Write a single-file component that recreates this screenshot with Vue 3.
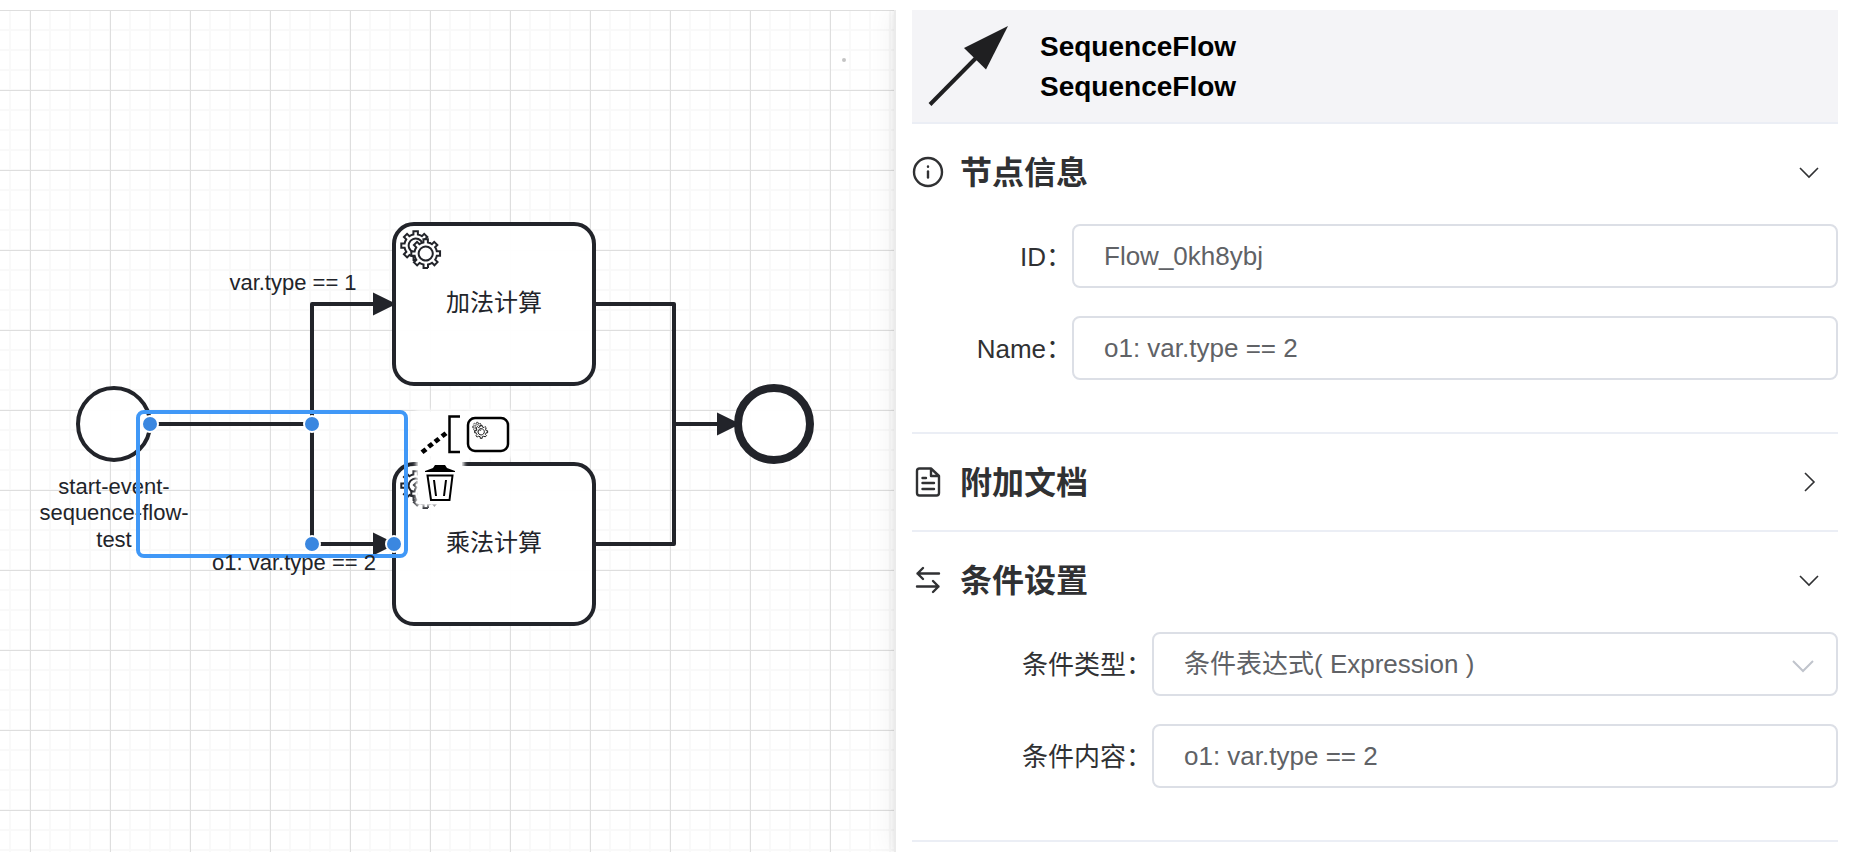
<script setup>
import { reactive, ref } from 'vue'

const gear =
  'v -1.71335 c 0.352326,-0.0705 0.703932,-0.17838 1.047628,-0.32133 0.344416,-0.14465 0.665822,-0.32133 0.966377,-0.52145 l 1.19431,1.18005 1.567487,-1.57688 -1.195028,-1.18014 c 0.403376,-0.61394 0.683079,-1.29908 0.825447,-2.01824 l 1.622133,-0.01 v -2.2196 l -1.636514,0.01 c -0.07333,-0.35153 -0.178319,-0.70024 -0.323564,-1.04372 -0.145244,-0.34406 -0.321407,-0.6644 -0.522735,-0.96217 l 1.131035,-1.13631 -1.583305,-1.56293 -1.129598,1.13589 c -0.614052,-0.40108 -1.302883,-0.68093 -2.022633,-0.82247 l 0.0093,-1.61852 h -2.241173 l 0.0042,1.63124 c -0.353763,0.0736 -0.705369,0.17977 -1.049785,0.32371 -0.344415,0.14437 -0.665102,0.32092 -0.9635006,0.52006 l -1.1698628,-1.15823 -1.5667691,1.5792 1.1684265,1.15669 c -0.4026573,0.61283 -0.68308,1.29797 -0.8247287,2.01713 l -1.6588041,0.003 v 2.22174 l 1.6724648,-0.006 c 0.073327,0.35077 0.1797598,0.70243 0.3242851,1.04472 0.1452428,0.34448 0.3214064,0.6644 0.5227339,0.96066 l -1.1993431,1.19723 1.5840256,1.56011 1.1964668,-1.19348 c 0.6140517,0.40346 1.3028827,0.68232 2.0233517,0.82331 l 7.19e-4,1.69892 h 2.226848 z m 0.221462,-3.9957 c -1.788948,0.7502 -3.8576,-0.0928 -4.6097055,-1.87438 -0.7521065,-1.78321 0.090598,-3.84627 1.8802645,-4.59604 1.78823,-0.74936 3.856881,0.0929 4.608987,1.87437 0.752106,1.78165 -0.0906,3.84612 -1.879546,4.59605 z'

const tasks = [
  { name: '加法计算', x: 394, y: 224 },
  { name: '乘法计算', x: 394, y: 464 },
]

const flows = [
  'M150 424H312V304H382',
  'M150 424H312V544H382',
  'M594 304H674V424H726',
  'M594 544H674V424H726',
]

const arrows = [
  { x: 394, y: 304 },
  { x: 394, y: 544 },
  { x: 738, y: 424 },
]

const bendpoints = [
  { x: 150, y: 424 },
  { x: 312, y: 424 },
  { x: 312, y: 544 },
  { x: 394, y: 544 },
]

const form = reactive({
  id: 'Flow_0kh8ybj',
  name: 'o1: var.type == 2',
  type: 'expression',
  body: 'o1: var.type == 2',
})

const infoOpen = ref(true)
const docOpen = ref(false)
const conditionOpen = ref(true)
</script>

<template>
  <div class="designer" lang="zh-CN">
    <main class="canvas">
      <svg class="diagram" aria-label="流程图">
        <defs>
          <pattern id="minor" width="20" height="20" patternUnits="userSpaceOnUse" x="9" y="19">
            <path d="M0 1H20M1 0V20" class="grid-minor" />
          </pattern>
          <pattern id="major" width="80" height="80" patternUnits="userSpaceOnUse" x="30" y="0">
            <path d="M0 0H80V1H1V80H0Z" class="grid-major" />
          </pattern>
        </defs>
        <rect width="100%" height="100%" fill="url(#minor)" />
        <rect width="100%" height="100%" fill="url(#major)" />
        <g transform="translate(0 -10)">
          <circle cx="844" cy="60" r="2" class="origin" />

          <circle cx="114" cy="424" r="36" class="shape" />
          <circle cx="774" cy="424" r="36" class="shape end" />
          <g v-for="task in tasks" :key="task.name" :transform="`translate(${task.x} ${task.y})`">
            <rect width="200" height="160" rx="20" class="shape" />
            <g transform="scale(2)" class="gears">
              <path :d="'m 12,18 ' + gear" />
              <circle cx="15.9" cy="14.9" r="3.6" class="gear-cover" />
              <path :d="'m 17,22 ' + gear" />
            </g>
            <text x="100" y="87" class="task-name">{{ task.name }}</text>
          </g>

          <path v-for="flow in flows" :key="flow" :d="flow" class="flow" />
          <path
            v-for="arrow in arrows"
            :key="`${arrow.x}-${arrow.y}`"
            :d="`M${arrow.x} ${arrow.y}l-20 -10v20z`"
            class="arrow"
          />

          <text x="293" y="290" class="label">var.type == 1</text>
          <text class="label">
            <tspan x="114" y="494">start-event-</tspan>
            <tspan x="114" y="520">sequence-flow-</tspan>
            <tspan x="114" y="547">test</tspan>
          </text>

          <rect x="138" y="412" width="268" height="144" rx="6" class="outline" />
          <text x="294" y="570" class="label">o1: var.type == 2</text>
          <circle
            v-for="point in bendpoints"
            :key="`${point.x}-${point.y}`"
            :cx="point.x"
            :cy="point.y"
            r="8"
            class="bendpoint"
          />
        </g>
      </svg>

      <div class="context-pad">
        <button type="button" class="entry" aria-label="添加注释">
          <svg viewBox="418 412 44 44" class="entry-icon">
            <path d="M460 416.5H449.5V452H460" class="pad-line" />
            <path
              d="M424.500 447.500l3 3.500-4 3-3-3.500zM431 442l3 3.500-4 3-3-3.500zM437.500 437l3 3.500-4 3-3-3.500zM444.500 431.500l3 3.500-4 3-3-3.500z"
            />
          </svg>
        </button>
        <button type="button" class="entry" aria-label="添加服务任务">
          <svg viewBox="466 412 44 44" class="entry-icon">
            <rect x="468" y="418" width="40" height="33" rx="7" class="pad-line" />
            <g transform="translate(472 423)" class="mini-gears">
              <path transform="translate(-3 -5) scale(.65)" :d="'m 14,21 ' + gear" />
              <path transform="translate(-6 -9) scale(.9)" :d="'m 18,27 ' + gear" />
            </g>
          </svg>
        </button>
        <button type="button" class="entry" aria-label="删除">
          <svg viewBox="418 460 44 44" class="entry-icon">
            <path d="M435 465h10l2 3 8 3v1h-30v-1l8-3z" />
            <path d="M427.500 475.500H452.500L449.500 500H431zM434 480l2 16M446 480l-2 16" class="pad-line trash" />
          </svg>
        </button>
      </div>
    </main>

    <aside class="panel">
      <header class="element-header">
        <svg class="element-icon" viewBox="0 0 112 112" aria-hidden="true">
          <path d="M18 94.500L64 48" class="element-shaft" />
          <path d="M96 16L52 38L74 59.500Z" fill="#1f1f21" />
        </svg>
        <div class="element-title">
          <div>SequenceFlow</div>
          <div>SequenceFlow</div>
        </div>
      </header>

      <section class="group">
        <h2 class="group-heading">
          <button type="button" class="group-toggle" :aria-expanded="infoOpen" @click="infoOpen = !infoOpen">
            <svg viewBox="0 0 32 32" class="group-icon">
              <circle cx="16" cy="16" r="14" />
              <path d="M16 15.500V21.500" />
              <path d="M16 10.500v.2" />
            </svg>
            <span class="group-name">节点信息</span>
            <svg viewBox="0 0 32 32" class="chevron" :class="{ closed: !infoOpen }"><path d="M7 12L16 21L25 12" /></svg>
          </button>
        </h2>
        <div v-if="infoOpen" class="fields">
          <div class="field">
            <label for="element-id">ID：</label>
            <input id="element-id" v-model="form.id" type="text" />
          </div>
          <div class="field">
            <label for="element-name">Name：</label>
            <input id="element-name" v-model="form.name" type="text" />
          </div>
        </div>
      </section>

      <section class="group">
        <h2 class="group-heading">
          <button type="button" class="group-toggle" :aria-expanded="docOpen" @click="docOpen = !docOpen">
            <svg viewBox="0 0 32 32" class="group-icon">
              <path d="M19 2.500H7.500Q5 2.500 5 5V27Q5 29.500 7.500 29.500H24.500Q27 29.500 27 27V10ZM19 2.500V10H27" />
              <path d="M10.500 12H14M10.500 17H22M10.500 23H22" />
            </svg>
            <span class="group-name">附加文档</span>
            <svg viewBox="0 0 32 32" class="chevron" :class="{ closed: !docOpen }"><path d="M7 12L16 21L25 12" /></svg>
          </button>
        </h2>
      </section>

      <section class="group">
        <h2 class="group-heading">
          <button
            type="button"
            class="group-toggle"
            :aria-expanded="conditionOpen"
            @click="conditionOpen = !conditionOpen"
          >
            <svg viewBox="0 0 32 32" class="group-icon">
              <path d="M27 9.500H5.500M11 4L5.500 9.500L11 15" />
              <path d="M5 22.500H26.500M21 17L26.500 22.500L21 28" />
            </svg>
            <span class="group-name">条件设置</span>
            <svg viewBox="0 0 32 32" class="chevron" :class="{ closed: !conditionOpen }">
              <path d="M7 12L16 21L25 12" />
            </svg>
          </button>
        </h2>
        <div v-if="conditionOpen" class="fields wide">
          <div class="field">
            <label for="condition-type">条件类型：</label>
            <div class="select">
              <select id="condition-type" v-model="form.type">
                <option value="expression">条件表达式( Expression )</option>
              </select>
              <svg viewBox="0 0 32 32" class="select-arrow"><path d="M6 12L16 22L26 12" /></svg>
            </div>
          </div>
          <div class="field">
            <label for="condition-body">条件内容：</label>
            <input id="condition-body" v-model="form.body" type="text" />
          </div>
        </div>
      </section>
    </aside>
  </div>
</template>

<style>
body {
  margin: 0;
  background: #fff;
}
</style>

<style scoped>
.designer {
  display: grid;
  grid-template-columns: minmax(0, 894fr) minmax(0, 958fr);
  box-sizing: border-box;
  height: 100vh;
  padding-top: 10px;
  overflow: hidden;
  font-family: 'Liberation Sans', 'Noto Sans CJK SC', sans-serif;
  color: #303133;
}

.canvas {
  position: relative;
  overflow: hidden;
}

.canvas::after {
  content: '';
  position: absolute;
  inset: 0 -8px 0 auto;
  width: 8px;
  box-shadow:
    0 0 24px rgba(0, 0, 0, 0.12),
    0 0 6px rgba(0, 0, 0, 0.1);
  pointer-events: none;
}

.diagram {
  display: block;
  width: 100%;
  height: 100%;
}

.grid-minor {
  stroke: #f9f9f9;
  stroke-width: 2;
}

.grid-major {
  fill: #dedede;
}

.origin {
  fill: #c4c4c4;
}

.shape {
  fill: #fff;
  fill-opacity: 0.95;
  stroke: #22242a;
  stroke-width: 4;
}

.end {
  stroke-width: 8;
}

.gears path {
  fill: #fff;
  fill-rule: evenodd;
  stroke: #22242a;
  stroke-width: 1;
}

.gear-cover {
  fill: #fff;
}

.task-name {
  font-size: 24px;
  text-anchor: middle;
  fill: #22242a;
}

.label {
  font-size: 22px;
  text-anchor: middle;
  fill: #22242a;
}

.flow {
  fill: none;
  stroke: #22242a;
  stroke-width: 4;
  stroke-linejoin: round;
}

.arrow {
  fill: #22242a;
  stroke: #22242a;
  stroke-width: 2;
}

.outline {
  fill: none;
  stroke: #4098f7;
  stroke-width: 4;
}

.bendpoint {
  fill: #3a87e0;
  stroke: #fff;
  stroke-width: 2;
}

.context-pad {
  position: absolute;
  top: 402px;
  left: 418px;
  display: grid;
  grid-template-columns: 44px 44px;
  gap: 4px;
}

.entry {
  height: 44px;
  padding: 0;
  border: 0;
  background: #fff;
  box-shadow: 0 0 4px 2px #fff;
}

.entry-icon {
  display: block;
  width: 100%;
  height: 100%;
}

.pad-line {
  fill: none;
  stroke: #000;
  stroke-width: 2.5;
}

.trash {
  stroke-width: 2;
}

.mini-gears path {
  fill: #fff;
  stroke: #000;
  stroke-width: 1;
}

.panel {
  position: relative;
  padding: 0 14px 0 16px;
  border-left: 2px solid #ebebeb;
  background: #fff;
}

.element-header {
  display: flex;
  align-items: center;
  gap: 16px;
  border-bottom: 2px solid #ebeef5;
  background: #f4f4f7;
}

.element-icon {
  width: 112px;
  height: 112px;
}

.element-shaft {
  fill: none;
  stroke: #1f1f21;
  stroke-width: 4;
}

.element-title {
  padding-top: 2px;
  font-size: 28px;
  font-weight: 700;
  line-height: 40px;
  color: #000;
}

.group {
  border-bottom: 2px solid #ebeef5;
}

.group-heading {
  margin: 0;
}

.group-toggle {
  display: flex;
  align-items: center;
  gap: 16px;
  box-sizing: border-box;
  width: 100%;
  height: 96px;
  padding: 0 13px 0 0;
  border: 0;
  background: none;
  font: inherit;
  font-size: 32px;
  font-weight: 700;
  color: inherit;
}

.group-name {
  padding-bottom: 4px;
}

.group-icon {
  width: 32px;
  height: 32px;
  fill: none;
  stroke: #303133;
  stroke-width: 2.4;
  stroke-linecap: round;
  stroke-linejoin: round;
}

.chevron {
  width: 32px;
  height: 32px;
  margin-left: auto;
  fill: none;
  stroke: #303133;
  stroke-width: 1.6;
}

.closed {
  transform: rotate(-90deg);
}

.fields {
  display: flex;
  flex-direction: column;
  gap: 28px;
  padding: 4px 0 52px;
}

.field {
  display: flex;
  align-items: center;
}

.field label {
  flex: none;
  width: 160px;
  padding-bottom: 4px;
  font-size: 26px;
  text-align: right;
}

.wide label {
  width: 240px;
}

.field input,
.field select {
  flex: 1;
  box-sizing: border-box;
  width: 100%;
  min-width: 0;
  height: 64px;
  margin: 0;
  padding: 0 30px;
  border: 2px solid #dcdfe6;
  border-radius: 8px;
  outline: 0;
  background: #fff;
  font: inherit;
  font-size: 26px;
  color: #606266;
  appearance: none;
}

.select {
  position: relative;
  flex: 1;
  min-width: 0;
}

.select select {
  display: block;
}

.select-arrow {
  position: absolute;
  top: 17px;
  right: 19px;
  width: 32px;
  height: 32px;
  fill: none;
  stroke: #c0c4cc;
  stroke-width: 2;
  pointer-events: none;
}
</style>
